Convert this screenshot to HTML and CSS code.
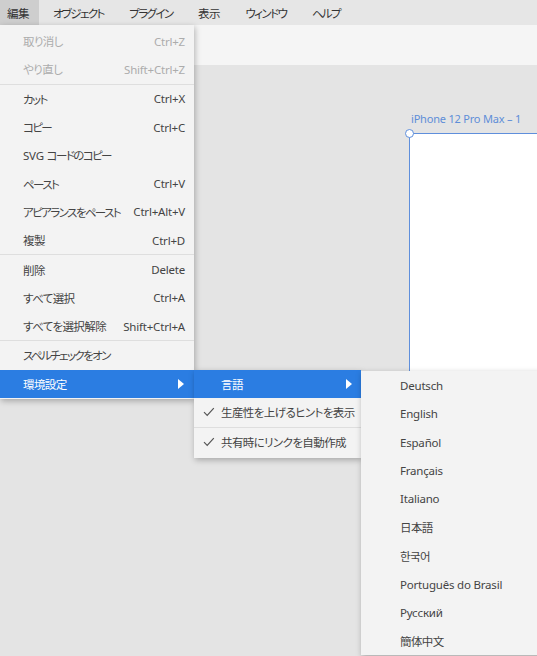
FILE: index.html
```html
<!DOCTYPE html>
<html lang="ja">
<head>
    <meta charset="UTF-8">
    <meta name="viewport" content="width=device-width, initial-scale=1.0">
    <title>編集メニュー</title>
    <link rel="stylesheet" href="styles.css">
</head>
<body>
    <nav class="menubar">
        <span class="menubar-item active ja">編集</span>
        <span class="menubar-item kana">オブジェクト</span>
        <span class="menubar-item kana">プラグイン</span>
        <span class="menubar-item ja">表示</span>
        <span class="menubar-item kana">ウィンドウ</span>
        <span class="menubar-item kana">ヘルプ</span>
    </nav>

    <div class="toolbar"></div>

    <main class="canvas">
        <div class="artboard">
            <span class="artboard-label">iPhone 12 Pro Max – 1</span>
            <span class="artboard-handle"></span>
        </div>
    </main>

    <!-- 編集メニュー -->
    <ul class="menu menu-edit">
        <li class="menu-item disabled"><span class="ja">取り消し</span><span class="shortcut">Ctrl+Z</span></li>
        <li class="menu-item disabled"><span class="ja">やり直し</span><span class="shortcut">Shift+Ctrl+Z</span></li>
        <li class="separator"></li>
        <li class="menu-item"><span class="kana">カット</span><span class="shortcut">Ctrl+X</span></li>
        <li class="menu-item"><span class="kana">コピー</span><span class="shortcut">Ctrl+C</span></li>
        <li class="menu-item"><span>SVG <span class="kana">コードのコピー</span></span></li>
        <li class="menu-item"><span class="kana">ペースト</span><span class="shortcut">Ctrl+V</span></li>
        <li class="menu-item"><span class="kana">アピアランスをペースト</span><span class="shortcut">Ctrl+Alt+V</span></li>
        <li class="menu-item"><span class="ja">複製</span><span class="shortcut">Ctrl+D</span></li>
        <li class="separator"></li>
        <li class="menu-item"><span class="ja">削除</span><span class="shortcut">Delete</span></li>
        <li class="menu-item"><span class="ja">すべて選択</span><span class="shortcut">Ctrl+A</span></li>
        <li class="menu-item"><span class="ja">すべてを選択解除</span><span class="shortcut">Shift+Ctrl+A</span></li>
        <li class="separator"></li>
        <li class="menu-item"><span class="kana">スペルチェックをオン</span></li>
        <li class="menu-item selected"><span class="ja">環境設定</span><span class="arrow"></span></li>
    </ul>

    <!-- 環境設定サブメニュー -->
    <ul class="menu menu-prefs">
        <li class="menu-item selected"><span class="check"></span><span class="ja">言語</span><span class="arrow"></span></li>
        <li class="menu-item">
            <svg class="check" width="12" height="10" viewBox="0 0 12 10"><path d="M1 5.2 L4.2 8.4 L10.8 1.2" fill="none" stroke="#555" stroke-width="1.2"/></svg>
            <span class="ja">生産性を上げるヒントを表示</span>
        </li>
        <li class="separator"></li>
        <li class="menu-item">
            <svg class="check" width="12" height="10" viewBox="0 0 12 10"><path d="M1 5.2 L4.2 8.4 L10.8 1.2" fill="none" stroke="#555" stroke-width="1.2"/></svg>
            <span class="ja">共有時にリンクを自動作成</span>
        </li>
    </ul>

    <!-- 言語サブメニュー -->
    <ul class="menu menu-lang">
        <li class="menu-item">Deutsch</li>
        <li class="menu-item">English</li>
        <li class="menu-item">Español</li>
        <li class="menu-item">Français</li>
        <li class="menu-item">Italiano</li>
        <li class="menu-item ja">日本語</li>
        <li class="menu-item ja">한국어</li>
        <li class="menu-item">Português do Brasil</li>
        <li class="menu-item">Русский</li>
        <li class="menu-item ja">簡体中文</li>
    </ul>
</body>
</html>
```

FILE: styles.css
```css
body {
    font-family: 'Noto Sans', 'Noto Sans CJK JP', 'Noto Sans CJK KR', sans-serif;
    font-size: 11.5px;
    letter-spacing: -0.2px;
    font-feature-settings: "palt";
    color: #444;
    margin: 0;
    padding: 0;
    width: 537px;
    height: 656px;
    overflow: hidden;
    position: relative;
    background-color: #e4e4e4;
}
.ja {
    letter-spacing: -0.6px;
}
.kana {
    letter-spacing: -1.6px;
}
.menubar {
    display: flex;
    height: 25px;
    background-color: #e6e6e6;
    color: #333;
}
.menubar-item {
    display: flex;
    align-items: center;
    padding: 0 11.5px 0 14px;
}
.menubar-item:first-child {
    padding: 0 10px 0 7px;
}
.menubar-item.active {
    background-color: #cecece;
}
.toolbar {
    height: 40px;
    background-color: #f5f5f5;
}
.canvas {
    position: relative;
    height: 591px;
}
.artboard {
    position: absolute;
    left: 409px;
    top: 68px;
    right: -10px;
    height: 400px;
    background-color: white;
    border: 1px solid #5f8fdc;
}
.artboard-label {
    position: absolute;
    left: 1px;
    top: -23px;
    font-size: 11px;
    color: #5e8ed8;
    white-space: nowrap;
}
.artboard-handle {
    position: absolute;
    left: -5px;
    top: -5px;
    width: 7px;
    height: 7px;
    border: 1px solid #5f8fdc;
    border-radius: 50%;
    background-color: white;
}
.menu {
    position: absolute;
    list-style: none;
    margin: 0;
    background-color: #f3f3f3;
    box-shadow: 1px 2px 6px rgba(0, 0, 0, 0.28);
}
.menu-item {
    display: flex;
    align-items: center;
    height: 28.3px;
    white-space: nowrap;
}
.menu-item.disabled {
    color: #acacac;
}
.menu-item.selected {
    background-color: #2b7de2;
    color: white;
}
.shortcut {
    margin-left: auto;
}
.separator {
    height: 1px;
    background-color: #dedede;
}
.arrow {
    margin-left: auto;
    width: 0;
    height: 0;
    border-top: 5px solid transparent;
    border-bottom: 5px solid transparent;
    border-left: 6px solid white;
}
.menu-edit {
    left: 0;
    top: 25px;
    width: 194px;
    padding: 2px 0 1px;
}
.menu-edit .menu-item {
    padding: 0 9px 0 23px;
}
.menu-edit .arrow {
    margin-right: 1px;
}
.menu-prefs {
    left: 194px;
    top: 370px;
    width: 167px;
    padding: 0 0 2px;
    z-index: 1;
}
.menu-prefs .menu-item {
    padding: 0 9px;
}
.check {
    width: 12px;
    margin-right: 6px;
    flex-shrink: 0;
}
.menu-lang {
    left: 361px;
    top: 371px;
    width: 190px;
    padding: 0;
    z-index: 2;
}
.menu-lang .menu-item {
    height: 28.45px;
    padding-left: 39px;
}
```
